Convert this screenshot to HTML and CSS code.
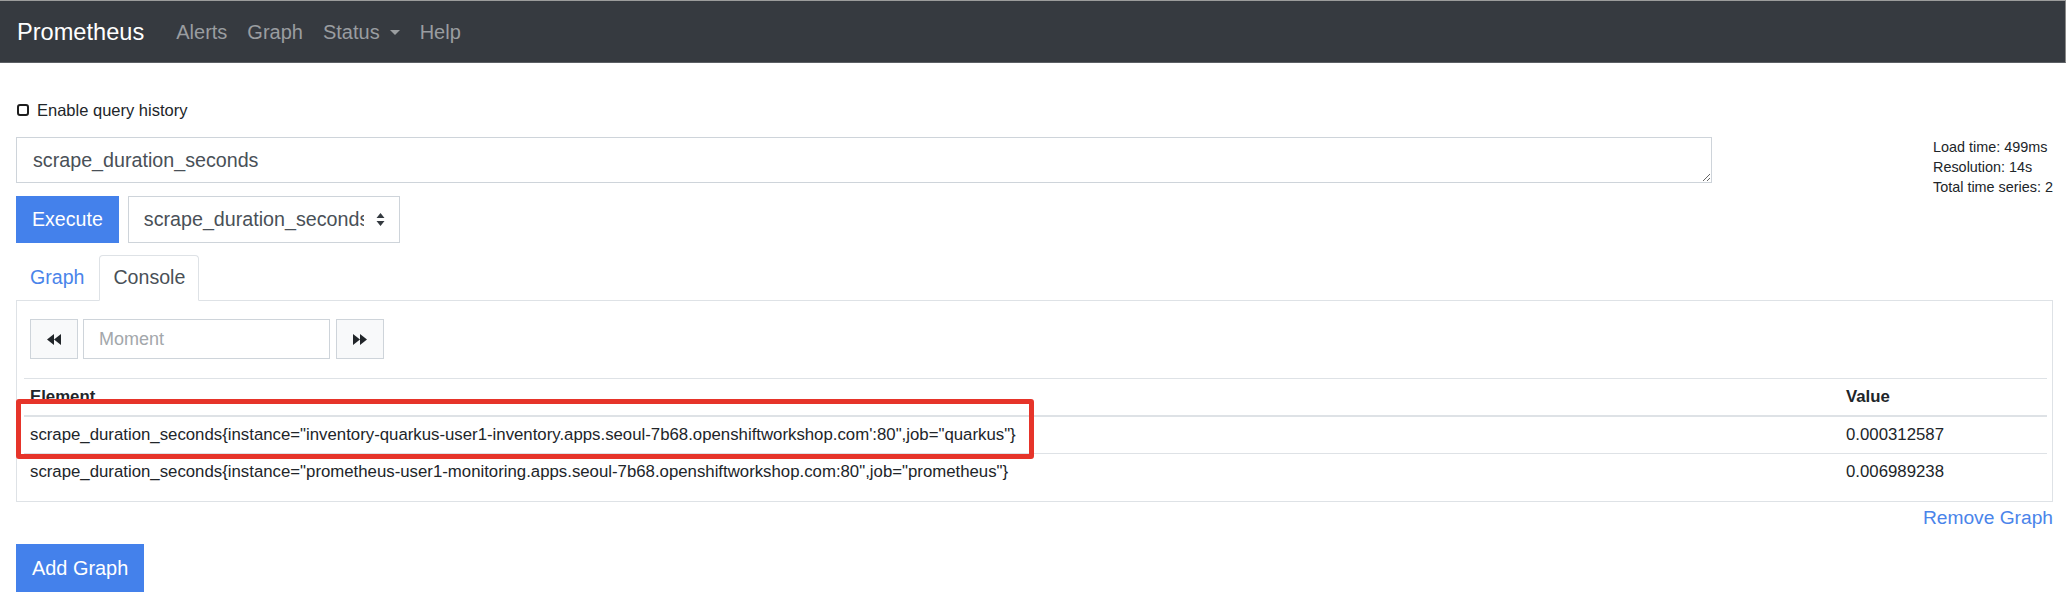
FILE: index.html
```html
<!DOCTYPE html>
<html lang="en">
<head>
<meta charset="utf-8">
<title>Prometheus Time Series Collection and Processing Server</title>
<link rel="stylesheet" href="styles.css">
</head>
<body>
<nav class="navbar">
  <a class="brand">Prometheus</a>
  <ul class="nav-links">
    <li><a>Alerts</a></li>
    <li><a>Graph</a></li>
    <li><a>Status<span class="caret"></span></a></li>
    <li><a>Help</a></li>
  </ul>
</nav>
<main class="main">
  <label class="history"><input type="checkbox" class="chk">Enable query history</label>
  <div class="query-row">
    <textarea class="expr">scrape_duration_seconds</textarea>
    <div class="stats">Load time: 499ms<br>Resolution: 14s<br>Total time series: 2</div>
  </div>
  <div class="exec-row">
    <button class="btn-primary">Execute</button>
    <div class="select">
      <span class="select-text">scrape_duration_seconds</span>
      <svg class="select-arrows" width="9" height="13" viewBox="0 0 9 13"><path d="M4.5 0L8.5 5H0.5z M4.5 13L0.5 8h8z" fill="#343a40"/></svg>
    </div>
  </div>
  <ul class="tabs">
    <li class="tab">Graph</li>
    <li class="tab active">Console</li>
  </ul>
  <div class="panel">
    <div class="time-controls">
      <button class="tbtn" aria-label="back"><svg width="14" height="11" viewBox="0 0 14 11"><path d="M7 0v11L0 5.5z M14 0v11L7 5.5z" fill="#212529"/></svg></button>
      <input class="moment" type="text" placeholder="Moment">
      <button class="tbtn" aria-label="forward"><svg width="14" height="11" viewBox="0 0 14 11"><path d="M0 0v11L7 5.5z M7 0v11L14 5.5z" fill="#212529"/></svg></button>
    </div>
    <table class="results">
      <thead>
        <tr><th>Element</th><th class="val">Value</th></tr>
      </thead>
      <tbody>
        <tr><td>scrape_duration_seconds{instance="inventory-quarkus-user1-inventory.apps.seoul-7b68.openshiftworkshop.com':80",job="quarkus"}</td><td>0.000312587</td></tr>
        <tr><td>scrape_duration_seconds{instance="prometheus-user1-monitoring.apps.seoul-7b68.openshiftworkshop.com:80",job="prometheus"}</td><td>0.006989238</td></tr>
      </tbody>
    </table>
    <div class="annotation"></div>
  </div>
  <div class="remove-row"><a>Remove Graph</a></div>
  <button class="btn-primary add">Add Graph</button>
</main>
</body>
</html>
```
FILE: styles.css
```css
* { box-sizing: border-box; }
html, body { margin: 0; padding: 0; background: #fff; }
body {
  font-family: "Liberation Sans", Arial, sans-serif;
  color: #212529;
  font-size: 19.7px;
}

.navbar {
  display: flex;
  align-items: center;
  height: 63px;
  margin-right: 2px;
  background: #363a40;
  border-top: 1px solid #9c9c9c;
  border-bottom: 1px solid #5b5f64;
  border-right: 1px solid #8a8a8a;
  padding-left: 17px;
}
.brand {
  color: #fff;
  font-size: 23.6px;
  line-height: 30px;
  margin-right: 22px;
}
.nav-links {
  display: flex;
  list-style: none;
  margin: 0;
  padding: 0;
}
.nav-links a {
  display: flex;
  align-items: center;
  padding: 0 10px;
  color: #9a9da0;
  font-size: 20px;
  line-height: 30px;
}
.caret {
  display: inline-block;
  margin-left: 10px;
  margin-top: 2px;
  border-top: 5px solid #9a9da0;
  border-left: 5px solid transparent;
  border-right: 5px solid transparent;
}

.main { padding: 0 15px 0 16px; }

.history {
  display: flex;
  align-items: center;
  margin-top: 35px;
  font-size: 16.5px;
  line-height: 24px;
}
.chk {
  -webkit-appearance: none;
  appearance: none;
  width: 12px;
  height: 12px;
  border: 2px solid #1e1e1e;
  border-radius: 3px;
  margin: 0 8px 0 1px;
}

.query-row {
  display: flex;
  align-items: flex-start;
  height: 46px;
  margin-top: 15px;
}
.expr {
  display: block;
  width: 1696px;
  height: 46px;
  margin: 0;
  border: 1px solid #ced4da;
  padding: 7px 16px;
  font-family: inherit;
  font-size: 19.7px;
  line-height: 30px;
  color: #495057;
  overflow: hidden;
}
.stats {
  margin-left: auto;
  font-size: 14.4px;
  line-height: 20px;
  color: #212529;
}

.exec-row {
  display: flex;
  gap: 9px;
  margin-top: 13px;
}
.btn-primary {
  display: block;
  height: 47px;
  padding: 0 16px;
  border: 0;
  background: #4481eb;
  color: #fff;
  font-family: inherit;
  font-size: 19.6px;
  line-height: 47px;
}
.select {
  display: flex;
  align-items: center;
  width: 272px;
  height: 47px;
  border: 1px solid #ced4da;
  padding: 0 14px 0 15px;
  font-size: 19.7px;
  color: #495057;
}
.select-text {
  width: 220px;
  overflow: hidden;
  white-space: nowrap;
}
.select-arrows { margin-left: auto; }

.tabs {
  display: flex;
  list-style: none;
  margin: 12px 0 0;
  padding: 0;
}
.tab {
  padding: 0 13px;
  line-height: 43px;
  border: 1px solid transparent;
  border-radius: 4px 4px 0 0;
  font-size: 19.6px;
  color: #4a84ea;
  margin-right: 1px;
}
.tab.active {
  color: #495057;
  background: #fff;
  border-color: #dee2e6 #dee2e6 #fff;
  margin-bottom: -1px;
  position: relative;
  z-index: 1;
}

.panel {
  position: relative;
  border: 1px solid #dee2e6;
  padding: 18px 5px 0 7px;
}
.time-controls {
  display: flex;
  height: 40px;
  margin: 0 0 19px 6px;
}
.tbtn {
  display: flex;
  align-items: center;
  justify-content: center;
  width: 48px;
  height: 40px;
  padding: 0;
  background: #f8f9fa;
  border: 1px solid #ced4da;
}
.moment {
  width: 247px;
  height: 40px;
  margin: 0 6px 0 5px;
  border: 1px solid #ced4da;
  padding: 0 15px;
  font-family: inherit;
  font-size: 18px;
  color: #495057;
}
.moment::placeholder { color: #a3a7ab; }

.results {
  width: 100%;
  border-collapse: collapse;
  font-size: 16.8px;
  line-height: 24px;
  margin-bottom: 11px;
}
.results th,
.results td {
  padding: 6px;
  text-align: left;
  vertical-align: top;
}
.results thead th {
  border-top: 1px solid #dee2e6;
  border-bottom: 2px solid #dee2e6;
  font-weight: bold;
}
.results tbody tr:first-child td { border-bottom: 1px solid #dee2e6; }
.results th.val { width: 207px; }

.annotation {
  position: absolute;
  left: -1px;
  top: 98px;
  width: 1018px;
  height: 60px;
  border: 5px solid #e6342a;
  border-radius: 3px;
}

.remove-row {
  margin-top: 1px;
  text-align: right;
  font-size: 19.2px;
  line-height: 30px;
  color: #4a84ea;
}

.btn-primary.add {
  margin-top: 11px;
  height: 48px;
  line-height: 48px;
  font-size: 19.9px;
}
```
